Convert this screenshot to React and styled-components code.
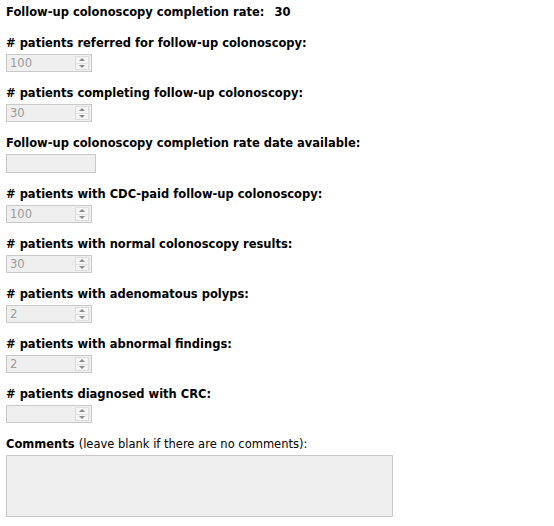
import React from "react";
import styled, { createGlobalStyle } from "styled-components";

const GlobalStyle = createGlobalStyle`
  body {
    margin: 0;
    background: #ffffff;
  }
`;

const Page = styled.div`
  padding: 5px 6px 0;
  font-family: "DejaVu Sans", Verdana, sans-serif;
  font-size: 11.5px;
  line-height: 14px;
  color: #000;
`;

const Title = styled.div`
  font-weight: bold;
  margin-bottom: 17px;

  span {
    margin-left: 6px;
  }
`;

const Field = styled.div`
  display: flex;
  flex-flow: column;
  align-items: flex-start;
  margin-bottom: 14px;
`;

const Label = styled.label`
  font-weight: bold;
  margin-bottom: 4px;

  em {
    font-style: normal;
    font-weight: normal;
  }
`;

const Box = styled.div`
  box-sizing: border-box;
  display: flex;
  align-items: center;
  width: ${(props) => props.width}px;
  height: ${(props) => props.height}px;
  border: 1px solid #c9c9c9;
  background-color: #efefef;
  color: #9a9a9a;
  padding-left: 3px;
`;

const Value = styled.span`
  flex: 1;
  font-size: 11.5px;
`;

const Spinner = styled.div`
  display: flex;
  flex-flow: column;
  width: 14px;
  height: 14px;
  margin-right: 2px;
  border: 1px solid #dcdcdc;
  background-color: #f5f5f5;
  box-sizing: border-box;
`;

const Arrow = styled.div`
  flex: 1;
  display: flex;
  align-items: center;
  justify-content: center;

  &::after {
    content: "";
    border-left: 3px solid transparent;
    border-right: 3px solid transparent;
    ${(props) =>
      props.up
        ? "border-bottom: 3px solid #8a8a8a;"
        : "border-top: 3px solid #8a8a8a;"}
  }

  & + & {
    border-top: 1px solid #e2e2e2;
  }
`;

const TextArea = styled(Box)`
  align-items: flex-start;
`;

const fields = [
  { label: "# patients referred for follow-up colonoscopy:", value: "100", type: "number" },
  { label: "# patients completing follow-up colonoscopy:", value: "30", type: "number" },
  { label: "Follow-up colonoscopy completion rate date available:", value: "", type: "text" },
  { label: "# patients with CDC-paid follow-up colonoscopy:", value: "100", type: "number" },
  { label: "# patients with normal colonoscopy results:", value: "30", type: "number" },
  { label: "# patients with adenomatous polyps:", value: "2", type: "number" },
  { label: "# patients with abnormal findings:", value: "2", type: "number" },
  { label: "# patients diagnosed with CRC:", value: "", type: "number" },
];

const NumberBox = ({ value }) => (
  <Box width={86} height={18}>
    <Value>{value}</Value>
    <Spinner>
      <Arrow up />
      <Arrow />
    </Spinner>
  </Box>
);

const App = () => {
  return (
    <Page>
      <GlobalStyle />
      <Title>
        Follow-up colonoscopy completion rate: <span>30</span>
      </Title>
      {fields.map((f) => (
        <Field key={f.label}>
          <Label>{f.label}</Label>
          {f.type === "number" ? (
            <NumberBox value={f.value} />
          ) : (
            <Box width={90} height={19} />
          )}
        </Field>
      ))}
      <Field>
        <Label>
          Comments <em>(leave blank if there are no comments):</em>
        </Label>
        <TextArea width={387} height={62} />
      </Field>
    </Page>
  );
};

export default App;
